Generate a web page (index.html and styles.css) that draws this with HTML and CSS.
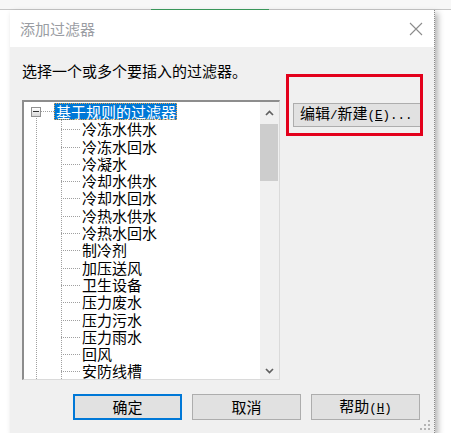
FILE: index.html
```html
<!DOCTYPE html>
<html lang="zh-CN">
<head>
    <meta charset="UTF-8">
    <meta name="viewport" content="width=device-width, initial-scale=1.0">
    <title>添加过滤器</title>
    <link rel="stylesheet" href="styles.css">
</head>
<body>
    <div class="topbar"><span class="tab-line"></span></div>

    <div class="dialog">
        <div class="titlebar">
            <span class="title">添加过滤器</span>
            <svg class="close" width="14" height="14" viewBox="0 0 14 14">
                <path d="M1 1 L13 13 M13 1 L1 13" stroke="#8c8c8c" stroke-width="1.1" fill="none"/>
            </svg>
        </div>

        <div class="content">
            <p class="prompt">选择一个或多个要插入的过滤器。</p>

            <div class="main">
                <div class="listbox">
                    <div class="tree">
                        <div class="root-row">
                            <span class="toggle"><span class="minus"></span></span>
                            <span class="connector"></span>
                            <span class="root-label">基于规则的过滤器</span>
                        </div>
                        <ul class="children">
                            <li>冷冻水供水</li>
                            <li>冷冻水回水</li>
                            <li>冷凝水</li>
                            <li>冷却水供水</li>
                            <li>冷却水回水</li>
                            <li>冷热水供水</li>
                            <li>冷热水回水</li>
                            <li>制冷剂</li>
                            <li>加压送风</li>
                            <li>卫生设备</li>
                            <li>压力废水</li>
                            <li>压力污水</li>
                            <li>压力雨水</li>
                            <li>回风</li>
                            <li>安防线槽</li>
                        </ul>
                    </div>
                    <div class="scrollbar">
                        <div class="arrow arrow-up">
                            <svg width="9" height="6" viewBox="0 0 9 6"><polyline points="1,5 4.5,1.5 8,5" stroke="#606060" stroke-width="1.7" fill="none"/></svg>
                        </div>
                        <div class="thumb"></div>
                        <div class="track"></div>
                        <div class="arrow arrow-down">
                            <svg width="9" height="6" viewBox="0 0 9 6"><polyline points="1,1 4.5,4.5 8,1" stroke="#606060" stroke-width="1.7" fill="none"/></svg>
                        </div>
                    </div>
                </div>

                <div class="side">
                    <button class="btn btn-edit">编辑<span class="mono">/</span>新建<span class="mono">(<u>E</u>)...</span></button>
                    <div class="mark-box"></div>
                </div>
            </div>

            <div class="footer">
                <button class="btn btn-default">确定</button>
                <button class="btn">取消</button>
                <button class="btn">帮助<span class="mono">(<u>H</u>)</span></button>
            </div>
        </div>

        <svg class="grip" width="11" height="11" viewBox="0 0 11 11">
            <rect x="8" y="0" width="2" height="2" fill="#b4b4b4"/>
            <rect x="4" y="4" width="2" height="2" fill="#b4b4b4"/>
            <rect x="8" y="4" width="2" height="2" fill="#b4b4b4"/>
            <rect x="0" y="8" width="2" height="2" fill="#b4b4b4"/>
            <rect x="4" y="8" width="2" height="2" fill="#b4b4b4"/>
            <rect x="8" y="8" width="2" height="2" fill="#b4b4b4"/>
        </svg>
    </div>
</body>
</html>
```

FILE: styles.css
```css
body {
    margin: 0;
    padding: 0;
    background-color: #fff;
    font-family: "Noto Sans CJK SC", "Liberation Sans", sans-serif;
    color: #000;
}

.topbar {
    height: 10px;
    display: flex;
    align-items: flex-end;
    background-color: #f7f7f7;
    box-shadow: inset 0 -1px #c6c6c6;
}

.tab-line {
    margin-left: 151px;
    width: 118px;
    height: 1px;
    background-color: #3c9d5d;
}

.dialog {
    position: relative;
    box-sizing: border-box;
    margin-left: 10px;
    width: 425px;
    height: 423px;
    background-color: #f0f0f0;
    border-right: 1px dotted #8a8a8a;
    box-shadow: 3px 3px 6px rgba(0, 0, 0, 0.3);
}

.titlebar {
    height: 37px;
    display: flex;
    align-items: center;
    justify-content: space-between;
    padding: 0 11px 0 10px;
    background-color: #fff;
}

.title {
    font-size: 15px;
    line-height: 18px;
    color: #9a9da3;
}

.close {
    display: block;
    margin-top: 1px;
}

.content {
    padding: 15px 13px 0 12px;
}

.prompt {
    margin: 0;
    font-size: 15px;
    line-height: 18px;
}

.main {
    display: flex;
    margin-top: 20px;
}

/* list box with tree */
.listbox {
    box-sizing: border-box;
    width: 261px;
    height: 280px;
    display: flex;
    background-color: #fff;
    border-top: 2px solid #8d8d8d;
    border-left: 2px solid #8d8d8d;
    border-right: 1px solid #dadada;
    border-bottom: 1px solid #dadada;
}

.tree {
    flex: 1;
    overflow: hidden;
    padding-top: 1px;
    font-size: 15px;
    background-image: repeating-linear-gradient(to bottom, #a0a0a0 0 1px, transparent 1px 2px);
    background-size: 1px 100%;
    background-position: 12px 16px;
    background-repeat: no-repeat;
}

.root-row {
    height: 17.3px;
    display: flex;
    align-items: center;
}

.toggle {
    box-sizing: border-box;
    width: 10px;
    height: 10px;
    margin-left: 7px;
    display: flex;
    align-items: center;
    justify-content: center;
    border: 1px solid #919191;
    background: linear-gradient(#fff, #d8d8d8);
}

.minus {
    width: 6px;
    height: 1px;
    background-color: #333;
}

.connector {
    width: 13px;
    height: 1px;
    background-image: repeating-linear-gradient(to right, #a0a0a0 0 1px, transparent 1px 2px);
}

.root-label {
    height: 17px;
    line-height: 17px;
    padding: 0 1px 0 2px;
    color: #fff;
    background-color: #0078d7;
    outline: 1px dotted #f0a040;
    outline-offset: -1px;
}

.children {
    list-style: none;
    margin: 0;
    padding: 0;
    background-image: repeating-linear-gradient(to bottom, #a0a0a0 0 1px, transparent 1px 2px);
    background-size: 1px 100%;
    background-position: 37px 0;
    background-repeat: no-repeat;
}

.children li {
    height: 17.3px;
    line-height: 17.3px;
    padding-left: 58px;
    white-space: nowrap;
    background-image: repeating-linear-gradient(to right, #a0a0a0 0 1px, transparent 1px 2px);
    background-size: 19px 1px;
    background-position: 37px 9px;
    background-repeat: no-repeat;
}

.scrollbar {
    width: 19px;
    display: flex;
    flex-direction: column;
    background-color: #f0f0f0;
}

.arrow {
    display: flex;
    align-items: center;
    justify-content: center;
}

.arrow-up {
    height: 22px;
}

.arrow-down {
    height: 17px;
}

.thumb {
    height: 57px;
    margin: 0 1px 0 0;
    background-color: #cdcdcd;
}

.track {
    flex: 1;
}

/* buttons */
.side {
    position: relative;
    margin-left: 13px;
}

.btn {
    box-sizing: border-box;
    height: 26px;
    padding: 0;
    font-family: "Noto Sans CJK SC", sans-serif;
    font-size: 15px;
    line-height: 18px;
    color: #000;
    background-color: #e1e1e1;
    border: 1px solid #adadad;
}

.mono {
    font-family: "Liberation Mono", monospace;
    font-size: 12.5px;
}

.btn-edit {
    margin-top: 1px;
    width: 128px;
    height: 24px;
    text-align: left;
    padding-left: 6px;
}

.mark-box {
    position: absolute;
    left: -7px;
    top: -26px;
    width: 137px;
    height: 62px;
    box-sizing: border-box;
    border: 3px solid #e3001b;
}

.footer {
    display: flex;
    justify-content: flex-end;
    gap: 10px;
    margin-top: 14px;
    padding-right: 1px;
}

.footer .btn {
    width: 109px;
}

.btn-default {
    border: 2px solid #0078d7;
}

.grip {
    position: absolute;
    right: 3px;
    bottom: 2px;
}
```
